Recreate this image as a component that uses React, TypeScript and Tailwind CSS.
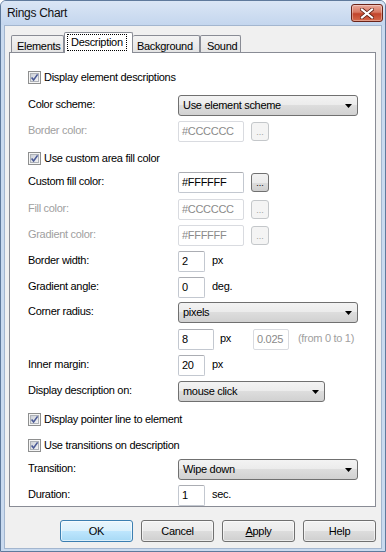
import React from 'react'

function CloseButton() {
  return (
    <div className="w-[32px] h-[18px] rounded-[3px] border border-[#6b2318] bg-[linear-gradient(#e9a99b,#d87862_45%,#c2442b_55%,#d66a4c)] flex items-center justify-center shadow-[inset_0_0_0_1px_rgba(255,255,255,0.35)]">
      <svg width="14" height="11" viewBox="0 0 14 11">
        <path d="M2 1.5 L12 9.5 M12 1.5 L2 9.5" stroke="#5a1c12" strokeWidth="3.6" strokeLinecap="square" />
        <path d="M2 1.5 L12 9.5 M12 1.5 L2 9.5" stroke="#ffffff" strokeWidth="2.2" strokeLinecap="square" />
      </svg>
    </div>
  )
}

function CheckBox({ label }: { label: string }) {
  return (
    <div className="flex items-center h-[21px]">
      <svg width="13" height="13" viewBox="0 0 13 13" className="shrink-0">
        <defs>
          <linearGradient id="cbfill" x1="0" y1="0" x2="1" y2="1">
            <stop offset="0" stopColor="#c9cdd4" />
            <stop offset="1" stopColor="#f6f6f7" />
          </linearGradient>
        </defs>
        <rect x="0.5" y="0.5" width="12" height="12" fill="#f5f5f5" stroke="#8e8f8f" />
        <rect x="2.5" y="2.5" width="8" height="8" fill="url(#cbfill)" stroke="#aeb2b8" />
        <path d="M3.6 6.4 L5.6 9 L9.6 3.4" fill="none" stroke="#4a5a96" strokeWidth="1.6" />
      </svg>
      <span className="ml-[3px]">{label}</span>
    </div>
  )
}

function TextBox({ value, className, disabled }: { value: string; className: string; disabled?: boolean }) {
  return (
    <div
      className={`h-[21px] rounded-[2px] border bg-white flex items-center pl-[3px] ${
        disabled ? 'border-[#d9dbe0] text-[#8a8a8a]' : 'border-[#c3c8d0] border-t-[#abadb3] text-black'
      } ${className}`}
    >
      {value}
    </div>
  )
}

function DotsButton({ disabled }: { disabled?: boolean }) {
  return (
    <div
      className={`ml-[7px] w-[18px] h-[19px] rounded-[3px] border flex items-end justify-center pb-[3px] text-[9px] leading-none tracking-[0px] ${
        disabled
          ? 'border-[#c4c7ca] bg-[#f4f4f4] text-[#a0a0a0]'
          : 'border-[#707070] bg-[linear-gradient(#f2f2f2,#ebebeb_50%,#dddddd_50%,#cfcfcf)] text-black'
      }`}
    >
      ...
    </div>
  )
}

function Select({ value, className }: { value: string; className: string }) {
  return (
    <div
      className={`h-[21px] rounded-[3px] border border-[#707070] bg-[linear-gradient(#f3f3f3,#ebebeb_50%,#dddddd_50%,#d1d1d1)] flex items-center pl-[4px] pr-[5px] ${className}`}
    >
      <span>{value}</span>
      <svg className="ml-auto" width="7" height="4" viewBox="0 0 7 4">
        <path d="M0 0 H7 L3.5 4 Z" fill="#000" />
      </svg>
    </div>
  )
}

function Label({ text, disabled }: { text: string; disabled?: boolean }) {
  return <span className={`w-[150px] shrink-0 pb-[2px] ${disabled ? 'text-[#a0a0a0]' : ''}`}>{text}</span>
}

function DlgButton({ children, primary }: { children: React.ReactNode; primary?: boolean }) {
  return (
    <div
      className={`w-[73px] h-[22px] rounded-[3px] border flex items-center justify-center ${
        primary
          ? 'border-[#3c7fb1] bg-[linear-gradient(#eaf6fd,#d9f0fc_50%,#bee6fd_50%,#a7d9f5)] shadow-[inset_0_0_0_1px_rgba(255,255,255,0.6)]'
          : 'border-[#707070] bg-[linear-gradient(#f2f2f2,#ebebeb_50%,#dddddd_50%,#cfcfcf)] shadow-[inset_0_0_0_1px_rgba(255,255,255,0.6)]'
      }`}
    >
      {children}
    </div>
  )
}

export default function App() {
  return (
    <div className="w-[386px] h-[552px] overflow-hidden rounded-t-[6px] border border-[#5f7a9c] bg-[#c9daef] font-['Liberation_Sans',Arial,sans-serif] text-[11px] tracking-[-0.3px] text-black">
      {/* Title bar */}
      <div className="h-[24px] flex items-center pl-[6px] pr-[2px] bg-[linear-gradient(#dae6f5,#c4d6ee)]">
        <span className="text-[12px] text-[#111]">Rings Chart</span>
        <div className="ml-auto">
          <CloseButton />
        </div>
      </div>

      {/* Client area */}
      <div className="mx-[3px] h-[524px] bg-[#f0f0f0] border border-[#a3b6cf] pl-[4px] pt-[6px]">
        {/* Tabs */}
        <div className="relative z-10 h-[20px] flex items-end pl-[2px]">
          <div className="w-[53px] h-[17px] rounded-t-[2px] border border-b-0 border-[#898c95] bg-[linear-gradient(#f3f3f3,#e4e4e4)] pl-[5px] pt-[2px]">
            Elements
          </div>
          <div className="w-[69px] h-[21px] -mb-[1px] rounded-t-[2px] border border-b-0 border-[#898c95] bg-white pl-[2px] pt-[1px]">
            <span className="inline-block h-[17px] leading-[15px] border border-dotted border-black px-[3px]">Description</span>
          </div>
          <div className="w-[67px] h-[17px] rounded-t-[2px] border border-b-0 border-l-0 border-[#898c95] bg-[linear-gradient(#f3f3f3,#e4e4e4)] pl-[4px] pt-[2px]">
            Background
          </div>
          <div className="w-[41px] h-[17px] rounded-t-[2px] border border-b-0 border-[#898c95] bg-[linear-gradient(#f3f3f3,#e4e4e4)] pl-[6px] pt-[2px]">
            Sound
          </div>
        </div>

        {/* Tab page */}
        <div className="w-[367px] h-[455px] border border-[#898c95] bg-white pl-[18px] flex flex-col">
          <div className="mt-[14px]">
            <CheckBox label="Display element descriptions" />
          </div>
          <div className="mt-[7px] h-[21px] flex items-center">
            <Label text="Color scheme:" />
            <Select value="Use element scheme" className="w-[180px]" />
          </div>
          <div className="mt-[5px] h-[21px] flex items-center">
            <Label text="Border color:" disabled />
            <TextBox value="#CCCCCC" className="w-[66px]" disabled />
            <DotsButton disabled />
          </div>
          <div className="mt-[6px]">
            <CheckBox label="Use custom area fill color" />
          </div>
          <div className="mt-[3px] h-[21px] flex items-center">
            <Label text="Custom fill color:" />
            <TextBox value="#FFFFFF" className="w-[66px]" />
            <DotsButton />
          </div>
          <div className="mt-[6px] h-[21px] flex items-center">
            <Label text="Fill color:" disabled />
            <TextBox value="#CCCCCC" className="w-[66px]" disabled />
            <DotsButton disabled />
          </div>
          <div className="mt-[5px] h-[21px] flex items-center">
            <Label text="Gradient color:" disabled />
            <TextBox value="#FFFFFF" className="w-[66px]" disabled />
            <DotsButton disabled />
          </div>
          <div className="mt-[5px] h-[21px] flex items-center">
            <Label text="Border width:" />
            <TextBox value="2" className="w-[27px]" />
            <span className="ml-[7px] pb-[2px]">px</span>
          </div>
          <div className="mt-[5px] h-[21px] flex items-center">
            <Label text="Gradient angle:" />
            <TextBox value="0" className="w-[27px]" />
            <span className="ml-[7px] pb-[2px]">deg.</span>
          </div>
          <div className="mt-[4px] h-[21px] flex items-center">
            <Label text="Corner radius:" />
            <Select value="pixels" className="w-[180px]" />
          </div>
          <div className="mt-[6px] h-[21px] flex items-center pl-[150px]">
            <TextBox value="8" className="w-[36px]" />
            <span className="ml-[6px] w-[33px] pb-[2px]">px</span>
            <TextBox value="0.025" className="w-[36px]" disabled />
            <span className="ml-[9px] pb-[2px] text-[#a0a0a0]">(from 0 to 1)</span>
          </div>
          <div className="mt-[5px] h-[21px] flex items-center">
            <Label text="Inner margin:" />
            <TextBox value="20" className="w-[27px]" />
            <span className="ml-[7px] pb-[2px]">px</span>
          </div>
          <div className="mt-[5px] h-[21px] flex items-center">
            <Label text="Display description on:" />
            <Select value="mouse click" className="w-[147px]" />
          </div>
          <div className="mt-[7px]">
            <CheckBox label="Display pointer line to element" />
          </div>
          <div className="mt-[5px]">
            <CheckBox label="Use transitions on description" />
          </div>
          <div className="mt-[3px] h-[21px] flex items-center">
            <Label text="Transition:" />
            <Select value="Wipe down" className="w-[180px]" />
          </div>
          <div className="mt-[5px] h-[21px] flex items-center">
            <Label text="Duration:" />
            <TextBox value="1" className="w-[27px]" />
            <span className="ml-[7px] pb-[2px]">sec.</span>
          </div>
        </div>

        {/* Dialog buttons */}
        <div className="w-[367px] mt-[13px] flex justify-end gap-[8px]">
          <DlgButton primary>OK</DlgButton>
          <DlgButton>Cancel</DlgButton>
          <DlgButton>
            <span>
              <span className="underline">A</span>pply
            </span>
          </DlgButton>
          <DlgButton>Help</DlgButton>
        </div>
      </div>
    </div>
  )
}
